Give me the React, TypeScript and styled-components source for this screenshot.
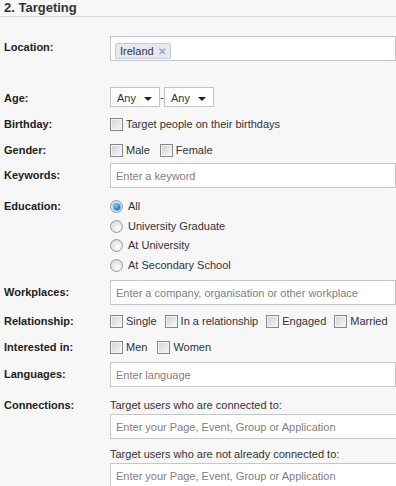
import React from "react";
import styled, { createGlobalStyle } from "styled-components";

const GlobalStyle = createGlobalStyle`
  html, body {
    margin: 0;
    padding: 0;
    background: #f7f7f7;
    overflow: hidden;
  }
  body {
    font-family: "Liberation Sans", Arial, sans-serif;
    font-size: 11px;
    color: #333;
  }
`;

const Page = styled.div`
  width: 396px;
  height: 486px;
  overflow: hidden;
`;

const Title = styled.h2`
  margin: 0;
  padding: 0 0 0 4px;
  height: 16px;
  line-height: 15px;
  font-size: 13px;
  font-weight: bold;
  color: #333;
  border-bottom: 1px solid #d3d7de;
`;

const Row = styled.div<{ $top?: number; $h?: number; $align?: string }>`
  display: flex;
  align-items: ${(p) => p.$align ?? "center"};
  margin-top: ${(p) => p.$top ?? 0}px;
  height: ${(p) => (p.$h ? `${p.$h}px` : "auto")};
`;

const Label = styled.div<{ $pad?: number }>`
  width: 106px;
  flex: none;
  padding-left: 4px;
  padding-top: ${(p) => p.$pad ?? 0}px;
  font-weight: bold;
  color: #222;
  line-height: 13px;
`;

const Field = styled.div`
  display: flex;
  flex-direction: column;
`;

const TextBox = styled.div<{ $top?: number }>`
  box-sizing: border-box;
  width: 300px;
  height: 25px;
  margin-top: ${(p) => p.$top ?? 0}px;
  background: #fff;
  border: 1px solid #c2c8d2;
  padding: 0 5px;
  display: flex;
  align-items: center;
  color: #808080;
`;

const TagBox = styled(TextBox)`
  align-items: flex-start;
  padding: 6px 4px 0;
`;

const Tag = styled.span`
  display: inline-flex;
  align-items: center;
  gap: 4px;
  height: 14px;
  padding: 0 4px;
  background: #e6e9f0;
  border: 1px solid #c6ccd8;
  border-radius: 2px;
  color: #333;
`;

const TagX = styled.span`
  color: #9aa3b5;
  font-size: 10px;
  font-weight: bold;
`;

const Select = styled.div`
  box-sizing: border-box;
  width: 50px;
  height: 20px;
  background: #fff;
  border: 1px solid #bfc5cf;
  display: flex;
  align-items: center;
  justify-content: space-between;
  padding: 1px 7px 0 6px;
  color: #333;
`;

const Arrow = styled.span`
  width: 0;
  height: 0;
  border-left: 4px solid transparent;
  border-right: 4px solid transparent;
  border-top: 4px solid #222;
  margin-top: 2px;
`;

const Dash = styled.span`
  width: 4px;
  text-align: center;
  color: #333;
`;

const Options = styled.div<{ $gap?: number }>`
  display: flex;
  align-items: center;
  gap: ${(p) => p.$gap ?? 10}px;
`;

const Option = styled.label`
  display: flex;
  align-items: center;
  gap: 3px;
  color: #333;
  line-height: 13px;
`;

const Box = styled.span`
  box-sizing: border-box;
  width: 13px;
  height: 13px;
  border: 1px solid #85898c;
  background: linear-gradient(135deg, #d0d0d0 0%, #e9e9e9 60%, #f7f7f7 100%);
  box-shadow: inset 0 0 0 1px #f4f4f4;
`;

const Radio = styled.span<{ $on?: boolean }>`
  box-sizing: border-box;
  width: 13px;
  height: 13px;
  border-radius: 50%;
  border: 1px solid #9a9a9a;
  background: radial-gradient(circle at 60% 65%, #ffffff 0%, #e4e4e4 55%, #cfcfcf 100%);
  display: flex;
  align-items: center;
  justify-content: center;
  &::after {
    content: "";
    display: ${(p) => (p.$on ? "block" : "none")};
    width: 6px;
    height: 6px;
    border-radius: 50%;
    background: radial-gradient(circle at 40% 35%, #8ad6f7 0%, #1b7bbd 60%, #0d4f86 100%);
    box-shadow: 0 0 1px 1px #5aa8d8;
  }
`;

const RadioList = styled.div`
  display: flex;
  flex-direction: column;
`;

const RadioItem = styled(Option)`
  height: 19.5px;
  gap: 5px;
`;

const Note = styled.div<{ $top?: number }>`
  height: 13px;
  line-height: 13px;
  margin-top: ${(p) => p.$top ?? 0}px;
  color: #333;
`;

const Check = ({ text }: { text: string }) => (
  <Option>
    <Box />
    {text}
  </Option>
);

export default function App() {
  return (
    <Page>
      <GlobalStyle />
      <Title>2. Targeting</Title>

      <Row $top={19} $h={25} $align="flex-start">
        <Label $pad={5}>Location:</Label>
        <TagBox>
          <Tag>
            Ireland <TagX>✕</TagX>
          </Tag>
        </TagBox>
      </Row>

      <Row $top={26} $h={20}>
        <Label $pad={2}>Age:</Label>
        <Select>
          Any <Arrow />
        </Select>
        <Dash>-</Dash>
        <Select>
          Any <Arrow />
        </Select>
      </Row>

      <Row $top={4} $h={26}>
        <Label>Birthday:</Label>
        <Check text="Target people on their birthdays" />
      </Row>

      <Row $h={26}>
        <Label>Gender:</Label>
        <Options>
          <Check text="Male" />
          <Check text="Female" />
        </Options>
      </Row>

      <Row $h={25}>
        <Label>Keywords:</Label>
        <TextBox>Enter a keyword</TextBox>
      </Row>

      <Row $top={9} $align="flex-start">
        <Label $pad={3}>Education:</Label>
        <RadioList>
          <RadioItem>
            <Radio $on />
            All
          </RadioItem>
          <RadioItem>
            <Radio />
            University Graduate
          </RadioItem>
          <RadioItem>
            <Radio />
            At University
          </RadioItem>
          <RadioItem>
            <Radio />
            At Secondary School
          </RadioItem>
        </RadioList>
      </Row>

      <Row $top={5} $h={25}>
        <Label>Workplaces:</Label>
        <TextBox>Enter a company, organisation or other workplace</TextBox>
      </Row>

      <Row $top={3} $h={26}>
        <Label>Relationship:</Label>
        <Options $gap={8}>
          <Check text="Single" />
          <Check text="In a relationship" />
          <Check text="Engaged" />
          <Check text="Married" />
        </Options>
      </Row>

      <Row $h={26}>
        <Label>Interested in:</Label>
        <Options>
          <Check text="Men" />
          <Check text="Women" />
        </Options>
      </Row>

      <Row $top={2} $h={25}>
        <Label>Languages:</Label>
        <TextBox>Enter language</TextBox>
      </Row>

      <Row $top={12} $align="flex-start">
        <Label>Connections:</Label>
        <Field>
          <Note>Target users who are connected to:</Note>
          <TextBox $top={2}>Enter your Page, Event, Group or Application</TextBox>
          <Note $top={9}>Target users who are not already connected to:</Note>
          <TextBox $top={2}>Enter your Page, Event, Group or Application</TextBox>
        </Field>
      </Row>
    </Page>
  );
}
